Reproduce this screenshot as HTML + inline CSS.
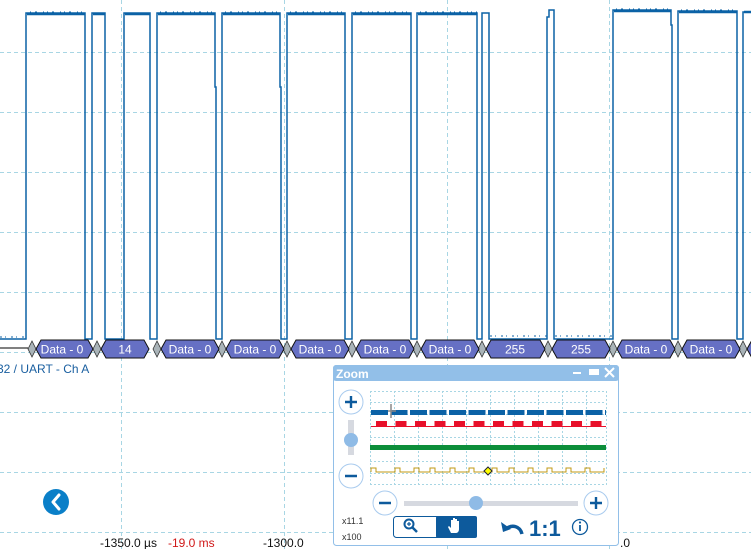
<!DOCTYPE html>
<html><head><meta charset="utf-8"><style>
html,body{margin:0;padding:0;background:#fff;width:751px;height:549px;overflow:hidden}
svg{display:block;font-family:"Liberation Sans",sans-serif}
</style></head><body>
<svg width="751" height="549" viewBox="0 0 751 549" xmlns="http://www.w3.org/2000/svg">
<g stroke="#a8d6e4" stroke-width="1" stroke-dasharray="4,3" fill="none">
<path d="M0 52.5H751M0 112.5H751M0 172.5H751M0 232.5H751M0 292.5H751M0 352.5H751M0 412.5H751M0 472.5H751M0 532.5H751"/>
<path d="M121.5 0V549M284.5 0V549M447.5 0V549M609.5 0V549"/>
</g>
<path d="M0 339H26V13H85V339H92V13H105V339H124V13H150V339H157V13H215V87H216V339H222V13H280V87H281V339H287V13H345V339H352V13H411V339H417V13H477V339H482V13H489V339H547V17H549V10H554V339H613V10H671V25H672V339H678V11H737V339H743V12H751" fill="none" stroke="#0b62a6" stroke-width="1.5"/>
<path d="M27 14H85M93 14H105M125 14H150M158 14H215M223 14H280M288 14H345M353 14H411M418 14H477M614 11H671M679 12H737M744 12H751" stroke="#0b62a6" stroke-width="2.5"/>
<path d="M30 12H85M160 12H215M225 12H280M290 12H345M355 12H411M420 12H477M616 9H671M681 10H737" stroke="#0b62a6" stroke-width="1" stroke-dasharray="1,4,2,6,1,3"/>
<path d="M0 337H26M490 336H547M555 336H612" stroke="#0b62a6" stroke-width="1" stroke-dasharray="2,3,1,5"/>
<line x1="0" y1="348" x2="28" y2="348" stroke="#000"/>
<g>
<path d="M28 349l4-8 4 8-4 8zM93 349l4-8 4 8-4 8zM153 349l4-8 4 8-4 8zM218 349l4-8 4 8-4 8zM283 349l4-8 4 8-4 8zM348 349l4-8 4 8-4 8zM413 349l4-8 4 8-4 8zM478 349l4-8 4 8-4 8zM544 349l4-8 4 8-4 8zM609 349l4-8 4 8-4 8zM674 349l4-8 4 8-4 8zM739 349l4-8 4 8-4 8z" fill="#a9b3b8" stroke="#333" stroke-width="0.8"/>
</g>
<g fill="#6670c4" stroke="#111" stroke-width="1">
<path d="M36 349l5-9h47l5 9-5 9h-47z"/>
<path d="M101 349l5-9h38l5 9-5 9h-38z"/>
<path d="M161 349l5-9h48l5 9-5 9h-48z"/>
<path d="M226 349l5-9h48l5 9-5 9h-48z"/>
<path d="M291 349l5-9h48l5 9-5 9h-48z"/>
<path d="M356 349l5-9h48l5 9-5 9h-48z"/>
<path d="M421 349l5-9h48l5 9-5 9h-48z"/>
<path d="M486 349l5-9h49l5 9-5 9h-49z"/>
<path d="M552 349l5-9h48l5 9-5 9h-48z"/>
<path d="M617 349l5-9h48l5 9-5 9h-48z"/>
<path d="M682 349l5-9h48l5 9-5 9h-48z"/>
<path d="M747 349l5-9h10v18h-10z"/>
</g>
<g fill="#fff" font-size="12" text-anchor="middle">
<text x="62" y="353.5">Data - 0</text><text x="125" y="353.5">14</text>
<text x="190" y="353.5">Data - 0</text><text x="255" y="353.5">Data - 0</text>
<text x="320" y="353.5">Data - 0</text><text x="385" y="353.5">Data - 0</text>
<text x="450" y="353.5">Data - 0</text><text x="515" y="353.5">255</text>
<text x="581" y="353.5">255</text><text x="646" y="353.5">Data - 0</text>
<text x="711" y="353.5">Data - 0</text>
</g>
<text x="-3" y="373" font-size="12" fill="#1a5fa0">32 / UART - Ch A</text>
<circle cx="56" cy="502" r="13" fill="#0a7fc8"/>
<path d="M59 495l-6 7 6 7" fill="none" stroke="#fff" stroke-width="3" stroke-linecap="round" stroke-linejoin="round"/>
<g font-size="12">
<text x="100" y="547" fill="#111">-1350.0 µs</text>
<text x="168" y="547" fill="#d01818">-19.0 ms</text>
<text x="263" y="547" fill="#111">-1300.0</text>
<text x="620" y="547" fill="#111">.0</text>
</g>
<rect x="333.5" y="365.5" width="285" height="180" rx="3" fill="#fff" stroke="#92bfe8"/>
<rect x="333" y="365" width="286" height="16" rx="3" fill="#92bfe8"/>
<text x="336" y="378" font-size="12" font-weight="bold" fill="#fff">Zoom</text>
<path d="M573 373h8" stroke="#fff" stroke-width="2"/>
<rect x="589" y="369" width="10" height="6" fill="#fff"/>
<path d="M605 368l9 9M614 368l-9 9" stroke="#fff" stroke-width="2"/>
<g stroke="#a8d6e4" stroke-dasharray="2,2" fill="none" stroke-width="1">
<path d="M370 391.5H606M370 402.5H606M370 414.5H606M370 426.5H606M370 437.5H606M370 449.5H606M370 461.5H606M370 473.5H606M370 484.5H606"/>
<path d="M370.5 391V485M394.5 391V485M418.5 391V485M442.5 391V485M466.5 391V485M490.5 391V485M514.5 391V485M538.5 391V485M562.5 391V485M586.5 391V485M606.5 391V485"/>
</g>
<path d="M371 412.5H606" stroke="#0b62a6" stroke-width="5" stroke-dasharray="17,2.5"/>
<path d="M376 423.5H606" stroke="#e8102a" stroke-width="5" stroke-dasharray="11,8.5"/>
<path d="M371 426.5H606" stroke="#e8102a" stroke-width="1"/>
<rect x="370" y="445" width="236" height="5" fill="#0c8e3a"/>
<path d="M371 472V468H376V472H395V468H400V472H414V468H419V472H430V468H435V472H450V468H455V472H469V468H474V472H492V468H497V472H509V468H514V472H528V468H533V472H547V468H552V472H566V468H571V472H585V468H590V472H604V468" fill="none" stroke="#c09a14" stroke-width="1"/>
<path d="M488 467l4 4-4 4-4-4z" fill="#ff0" stroke="#223"/>
<path d="M391 404v14M388 411h8" stroke="#888" stroke-width="1.5"/>
<g fill="#fff" stroke="#a9cbee" stroke-width="1">
<circle cx="351" cy="402" r="12"/><circle cx="351" cy="476" r="12"/>
<circle cx="385" cy="503" r="12"/><circle cx="596" cy="503" r="12"/>
</g>
<g stroke="#0d5a9c" stroke-width="2.4">
<path d="M345 402h12M351 396v12M345 476h12M379 503h12M590 503h12M596 497v12"/>
</g>
<rect x="348" y="420" width="6" height="35" fill="#d6d9e0"/>
<circle cx="351" cy="440" r="7" fill="#8fbbe6"/>
<rect x="404" y="501" width="174" height="5" fill="#d6d9e0"/>
<circle cx="476" cy="503" r="7" fill="#8fbbe6"/>
<text x="342" y="524" font-size="9" fill="#333">x11.1</text>
<text x="342" y="540" font-size="9" fill="#333">x100</text>
<rect x="393.5" y="516.5" width="83" height="21" rx="3" fill="#fff" stroke="#0d5a9c"/>
<rect x="436" y="516" width="41" height="22" rx="2" fill="#0d5a9c"/>
<circle cx="409" cy="524" r="4.5" fill="none" stroke="#0d5a9c" stroke-width="2"/>
<path d="M412 527l5 5" stroke="#0d5a9c" stroke-width="2.5"/>
<path d="M407 524h4M409 522v4" stroke="#0d5a9c" stroke-width="1.2"/>
<path d="M451 533l-3-6 1-1 2 2v-8h2v6-8h2v8-7h2v7-5h2v8c0 2-1 4-3 4z" fill="#fff"/>
<path d="M522 534c-2-8-10-10-16-5" fill="none" stroke="#0d5a9c" stroke-width="3.5"/>
<path d="M501 522l2 10 8-3z" fill="#0d5a9c"/>
<text x="529" y="536" font-size="22" font-weight="bold" fill="#0d5a9c">1:1</text>
<circle cx="580" cy="527" r="7.5" fill="#fff" stroke="#0d5a9c" stroke-width="1.3"/>
<path d="M580 525v6" stroke="#0d5a9c" stroke-width="1.8"/>
<circle cx="580" cy="522.5" r="1.1" fill="#0d5a9c"/>
</svg>
</body></html>
